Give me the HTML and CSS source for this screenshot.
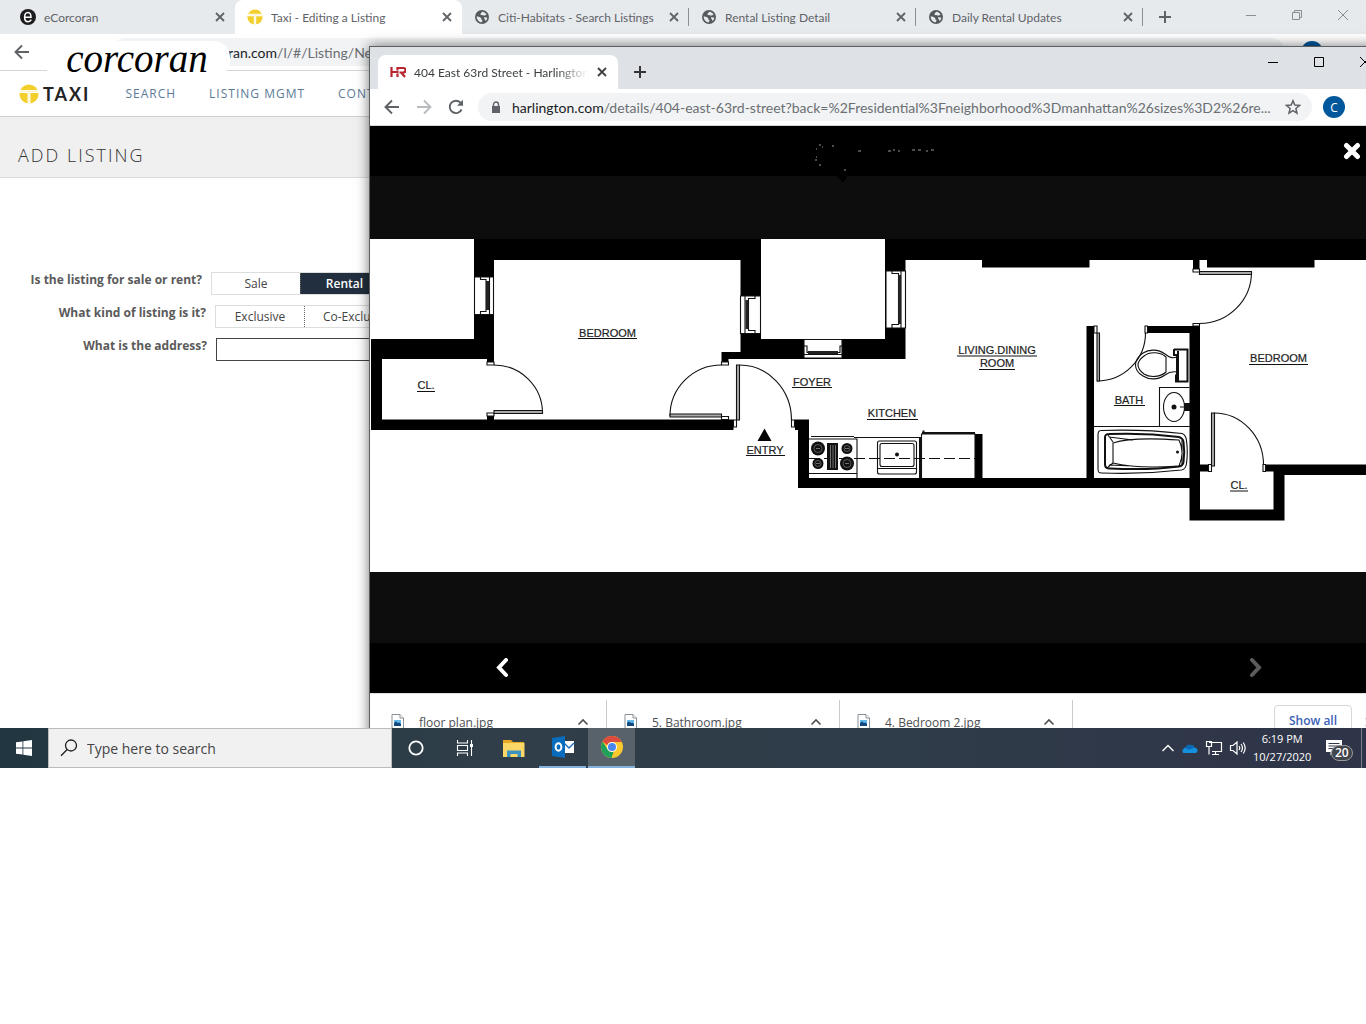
FILE: index.html
```html
<!DOCTYPE html>
<html lang="en">
<head>
<meta charset="utf-8">
<title>Taxi - Editing a Listing</title>
<link rel="stylesheet" href="styles.css">
</head>
<body>
<svg class="sprite" aria-hidden="true">
  <symbol id="x" viewBox="0 0 12 12"><path d="M2 2l8 8M10 2l-8 8" fill="none" stroke="currentColor" stroke-width="1.8"/></symbol>
  <symbol id="plus" viewBox="0 0 12 12"><path d="M6 0v12M0 6h12" fill="none" stroke="currentColor" stroke-width="2"/></symbol>
  <symbol id="globe" viewBox="0 0 16 16"><circle cx="8" cy="8" r="7" fill="#55595d"/><path d="M2.6 7.6c1.500 .1 3.200 .2 4.400 1.300.9.900 0 1.700 1 2.100 1.400.4-.1 1.700-.6 2.500C4.700 13.200 2.700 11 2.600 7.600zM8.200 2.700c2 .2 3.500 1.200 4.500 2.900-1.300.6-1.900 1.300-3 .9C8.700 6.200 7 6.600 6.500 5.500c-.3-1.100 1-1.500 1.700-2.800zM10.200 8.300c1.100-.3 2 .1 3.100.5-.2 1.400-.9 2.500-1.900 3.300-.2-1-.1-1.500-.8-2.200-.5-.5-.9-1-.4-1.600z" fill="#e7eaed"/></symbol>
  <symbol id="taxi" viewBox="0 0 20 20"><circle cx="10" cy="10" r="9.500" fill="#f3cf2c"/><path d="M1 7.500h18M10 7.500V20" stroke="#fff" stroke-width="3" fill="none"/><path d="M1 7.200h18M10 7.500V20" stroke="#f8e48c" stroke-width=".6" fill="none"/></symbol>
  <symbol id="back" viewBox="0 0 16 16"><path d="M15 8H2M8 1.500L1.500 8 8 14.500" fill="none" stroke="currentColor" stroke-width="1.900"/></symbol>
  <symbol id="min" viewBox="0 0 12 12"><path d="M1 6.500h10" stroke="currentColor"/></symbol>
  <symbol id="max" viewBox="0 0 12 12"><path d="M1.500 1.500h9v9h-9z" fill="none" stroke="currentColor"/></symbol>
  <symbol id="restore" viewBox="0 0 12 12"><path d="M1.500 3.500h7v7h-7zM3.500 3.500v-2h7v7h-2" fill="none" stroke="currentColor"/></symbol>
  <symbol id="close" viewBox="0 0 12 12"><path d="M1 1l10 10M11 1L1 11" stroke="currentColor"/></symbol>
  <symbol id="caret" viewBox="0 0 12 8"><path d="M1.500 6.500L6 2l4.500 4.500" fill="none" stroke="currentColor" stroke-width="1.600"/></symbol>
  <symbol id="file" viewBox="0 0 14 17"><path d="M1 .5h8L12.500 4v12.500H1z" fill="#fff" stroke="#8a9096"/><path d="M9 .5V4h3.500" fill="#fff" stroke="#8a9096"/><path d="M3 6h7v6H3z" fill="#62b8e8"/><path d="M3 12V9l2-1.500L7 9l1.500-.500L10 10v2z" fill="#12497e"/></symbol>
</svg>

<main class="desktop">
  <section class="browser" aria-label="Taxi">
    <div class="tabs">
      <div class="tab">
        <svg class="i16" viewBox="0 0 16 16"><circle cx="8" cy="8" r="8" fill="#1d1d1f"/><path d="M4.800 8.300h6.200C11 5 9.800 3.400 8 3.400 5.800 3.400 4.600 5.500 4.600 8.200c0 2.800 1.400 4.500 3.600 4.500 1.400 0 2.400-.8 3-2" fill="none" stroke="#fff" stroke-width="1.500"/></svg>
        <span class="tab-title">eCorcoran</span><button class="tab-close" aria-label="Close"><svg><use href="#x"/></svg></button>
      </div>
      <div class="tab tab-active">
        <svg class="i16"><use href="#taxi"/></svg>
        <span class="tab-title">Taxi - Editing a Listing</span><button class="tab-close" aria-label="Close"><svg><use href="#x"/></svg></button>
      </div>
      <div class="tab tab-line"><svg class="i16"><use href="#globe"/></svg><span class="tab-title">Citi-Habitats - Search Listings</span><button class="tab-close" aria-label="Close"><svg><use href="#x"/></svg></button></div>
      <div class="tab tab-line"><svg class="i16"><use href="#globe"/></svg><span class="tab-title">Rental Listing Detail</span><button class="tab-close" aria-label="Close"><svg><use href="#x"/></svg></button></div>
      <div class="tab tab-line"><svg class="i16"><use href="#globe"/></svg><span class="tab-title">Daily Rental Updates</span><button class="tab-close" aria-label="Close"><svg><use href="#x"/></svg></button></div>
      <button class="new-tab" aria-label="New tab"><svg><use href="#plus"/></svg></button>
      <div class="controls">
        <button aria-label="Minimize"><svg><use href="#min"/></svg></button>
        <button aria-label="Restore"><svg><use href="#restore"/></svg></button>
        <button aria-label="Close window"><svg><use href="#close"/></svg></button>
      </div>
    </div>
    <div class="toolbar">
      <button class="tool" aria-label="Back"><svg><use href="#back"/></svg></button>
      <div class="address"><b>ran.com</b>/l/#/Listing/New</div>
      <span class="avatar avatar-back"></span>
      <div class="corcoran">corcoran</div>
    </div>
    <nav class="site-nav">
      <a class="brand" href="#"><svg><use href="#taxi"/></svg>TAXI</a>
      <a href="#">SEARCH</a><a href="#">LISTING MGMT</a><a href="#">CONTACTS</a>
    </nav>
    <header class="page-head"><h1>ADD LISTING</h1></header>
    <form class="listing">
      <div class="field field-sale" role="group" aria-labelledby="l1">
        <span class="label" id="l1">Is the listing for sale or rent?</span>
        <div class="toggle"><button type="button">Sale</button><button type="button" class="on">Rental</button></div>
      </div>
      <div class="field field-kind" role="group" aria-labelledby="l2">
        <span class="label" id="l2">What kind of listing is it?</span>
        <div class="toggle"><button type="button">Exclusive</button><button type="button" class="wide">Co-Exclusive</button></div>
      </div>
      <div class="field field-address">
        <label class="label" for="addr">What is the address?</label>
        <input id="addr" type="text">
      </div>
    </form>
  </section>

  <section class="browser popup" aria-label="Harlington">
    <div class="tabs">
      <div class="tab tab-active">
        <svg class="i16" viewBox="0 0 16 16"><path d="M1.500 3v10M1.500 8h7M7.500 3v3.500M7.500 9.500V13M8 4h5.200a1.900 1.900 0 010 4.500H9.500M11.500 9l3.500 4" fill="none" stroke="#b8262f" stroke-width="2.200"/></svg>
        <span class="tab-title">404 East 63rd Street - Harlington</span><button class="tab-close" aria-label="Close"><svg><use href="#x"/></svg></button>
      </div>
      <button class="new-tab" aria-label="New tab"><svg><use href="#plus"/></svg></button>
      <div class="controls">
        <button aria-label="Minimize"><svg><use href="#min"/></svg></button>
        <button aria-label="Maximize"><svg><use href="#max"/></svg></button>
        <button aria-label="Close window"><svg><use href="#close"/></svg></button>
      </div>
    </div>
    <div class="toolbar">
      <button class="tool" aria-label="Back"><svg><use href="#back"/></svg></button>
      <button class="tool tool-off" aria-label="Forward"><svg class="flip"><use href="#back"/></svg></button>
      <button class="tool" aria-label="Reload"><svg viewBox="0 0 16 16"><path d="M13.600 10.500A6.200 6.200 0 1112.500 3.700L14 5.200" fill="none" stroke="currentColor" stroke-width="1.900"/><path d="M15 .8v6H9z" fill="currentColor"/></svg></button>
      <div class="address">
        <svg class="lock" viewBox="0 0 10 13"><path d="M1 5h8v7H1z" fill="#5f6368"/><path d="M2.500 5V3.500a2.500 2.500 0 015 0V5" fill="none" stroke="#5f6368" stroke-width="1.400"/></svg>
        <span class="url"><b>harlington.com</b>/details/404-east-63rd-street?back=%2Fresidential%3Fneighborhood%3Dmanhattan%26sizes%3D2%26re...</span>
        <button class="star" aria-label="Bookmark"><svg viewBox="0 0 16 16"><path d="M8 1.800l1.800 4.300 4.700.4-3.600 3 1.100 4.600L8 11.700l-4 2.400 1.100-4.600-3.600-3 4.700-.4z" fill="none" stroke="#5f6368" stroke-width="1.500"/></svg></button>
      </div>
      <span class="avatar">C</span>
      <button class="menu" aria-label="Menu"><svg viewBox="0 0 4 16"><path d="M1 2h2v2H1zM1 7h2v2H1zM1 12h2v2H1z" fill="currentColor"/></svg></button>
    </div>
    <div class="viewer">
      <div class="viewer-bar viewer-top">
        <svg class="specks" viewBox="0 0 122 34" aria-hidden="true"><path d="M20 38h16l-7 11z" fill="#000"/><path d="M5 11h2M2 15h1M8 13h1M18 12h2M2 23h1M1 26h2M5 31h2M44 17h3M30 36h2M74 17h3M79 16h2M84 17h2M98 16h3M104 16h3M112 17h2M117 16h3" fill="none" stroke="#999"/></svg>
        <button class="viewer-close" aria-label="Close image"><svg viewBox="0 0 18 18"><path d="M3.500 3.500l11 11M14.500 3.500l-11 11" stroke="#fff" stroke-width="5" stroke-linecap="round"/></svg></button>
      </div>
      <svg class="plan" viewBox="370 239 1018 333" role="img" aria-label="Floor plan">
        <rect x="370" y="239" width="1018" height="333" fill="#fff"/>
        <g class="wall">
          <path d="M474 239h287v100h124v-100h503v21H905.500v99H728.500v3h-7v-10h19v-92H494v102h-7v-3H382v60.500h105v-3.500h7v3.500h239.500v10.500H371v-91h103z"/>
          <path d="M795 419.500h14V478h166v-44h7.500v44h104V326h7.500v152h95.500V333h-42v-7h52.500v138.500h8.500v7H1200v38h73.500v-38h-8.500v-7H1388V475H1284.500v45.500h-95V488H798v-58h-3z"/>
          <path d="M982 260h107.500v7.500H982zM1207 260h107.500v7.500H1207zM1193 260h6.500v9h-6.500z"/>
          <path d="M764.500 428.500l7 12.500h-14z"/>
        </g>
        <g class="line fill-white">
          <path d="M474.500 277h19v37.500h-19zM740.500 296h20v37.500h-20zM886 271h19.500v57H886zM804 339.500h38V358h-38z"/>
          <path d="M487 362h7v3h-7zM487 413h7v3h-7zM721.500 362h7v3h-7zM721.500 416.500h7v3h-7zM733.500 420h3v7h-3zM791.500 420h3v7h-3zM1193 269h6.500v3h-6.500zM1193 323.500h6.500v2.500h-6.500zM1145 326h2.500v7h-2.500zM1094 326h3v7h-3zM1208.500 464.500h3v7h-3zM1263 464.500h2.500v7h-2.500z"/>
        </g>
        <g class="line">
          <path d="M480.500 277v2.500h5.500v32h-5.500v3M489.500 277v37.500M755 296v2.500h-6.500v32h6.500v3M745 296v37.500M892 271v2.500h6.500v51H892v3.500M901 271v57M804 346h3v6.500h33V346h2M804 354.500h38"/>
          <path class="glass" d="M487.500 281v29M747 300v29M899.500 275v49M808 352.500h30"/>
          <path d="M494 365a48.500 48 0 0148.500 48M721.500 365A51.500 51 0 00670 416M739.500 365a52 55 0 0152 55M1251.500 272a52 51.500 0 01-52 51.500M1097 381a48.500 48 0 0048.500-48M1214 413a49.500 52 0 0149.500 52"/>
        </g>
        <g class="line leaf">
          <path d="M494 410.500h48.500v3H494zM670 414h51.500v3H670zM736.500 365h3v55h-3zM1199.500 271.500h52v3h-52zM1097 333h2.500v48h-2.500zM1211.500 413h3v53h-3z"/>
        </g>
        <g class="line">
          <path d="M809 439h48v39M811 436.500h43M809 473.500h48M854 437.500h66.500V478M921.500 478v-44h53.500V478"/>
          <path class="thick" d="M922 433h53M920 437v41M922.500 431.500h2"/>
          <rect x="877.500" y="441" width="39" height="33" rx="2"/><rect x="880" y="443.500" width="34" height="23" rx="2"/><path d="M878 468.500h38"/>
          <path d="M809 458.500h166" stroke-dasharray="11 4"/>
        </g>
        <g class="burners">
          <circle cx="818" cy="448.500" r="7"/><circle cx="847" cy="448.500" r="5.500"/><circle cx="818" cy="463.500" r="5.500"/><circle cx="847" cy="463.500" r="7"/><path d="M827 443h11v27h-11z"/>
          <circle cx="897" cy="454.500" r="2"/><circle cx="1174" cy="407" r="2.500"/><circle cx="1177.500" cy="452" r="1.500"/><path d="M1184 403h6v8h-6z"/>
        </g>
        <path d="M830.500 445v23M833 445v23M835.500 445v23M816 448.500h4M845 448.500h4M816 463.500h4M845 463.500h4" stroke="#999" stroke-width=".7"/>
        <circle class="ring" cx="818" cy="448.500" r="4"/><circle class="ring" cx="847" cy="448.500" r="3"/><circle class="ring" cx="818" cy="463.500" r="3"/><circle class="ring" cx="847" cy="463.500" r="4"/>
        <g class="line">
          <path class="thick" d="M1174 349.500h14.500M1174 349v6h3v20.500h-1v6h12.500M1178 351v30M1187.500 350v31"/>
          <path d="M1177 357c-5 2-8 0-12-3-7-5-16-5-22-1-10 7-10 17 0 23 6 4 15 4 22-1 4-3 7-4 12-3M1166 357c-5-5-16-6-22-1-8 6-8 12 0 18 6 4 17 3 22-2z"/>
          <path d="M1159.500 426v-38.500h30M1094 426.500h96M1180 407h6"/><ellipse cx="1174" cy="407" rx="10.500" ry="14.500"/>
          <path d="M1101 430.500c26-1 55 0 81 3 3 1 4 3 4.500 7 1 8 1 16 0 23-.5 4-2 6-5 6.500-26 3-55 4-80 3-3 0-3.500-1-3.500-4v-34c0-3 1-4.500 3-4.500z"/>
          <path class="thick" d="M1109 434c24-1 47 0 70 3 3 1 4 2 4.500 5 1 7 1 13 0 20-.5 3-2 4-4.500 4.500-23 3-46 3-69 2-3 0-5-1-5-4v-27c0-3 1-3.500 4-3.500z"/>
          <path d="M1113 443c15-5 38-5 66-3 4 8 4 17 0 26-28 2-50 1-66-3v-20zM1108 435l5 7M1108 467l5-4M1109 437l24 3M1109 465l24 1M1182 440v24"/>
        </g>
        <g class="names">
          <text x="607.500" y="337">BEDROOM</text><text x="426" y="389">CL.</text><text x="812" y="386">FOYER</text><text x="892" y="417">KITCHEN</text><text x="765" y="454">ENTRY</text><text x="997" y="354">LIVING.DINING</text><text x="997" y="367">ROOM</text><text x="1129" y="404">BATH</text><text x="1278.500" y="362">BEDROOM</text><text x="1239" y="489">CL.</text>
        </g>
        <path class="line" d="M578 338.500h59M417 391.500h18M792 387.500h40M867 419.500h51M746 455.500h39M957 356h80M979 369.500h36M1114 405.500h31M1249 364.500h59M1230 491h18"/>
      </svg>
      <div class="viewer-bar viewer-nav">
        <button aria-label="Previous"><svg viewBox="0 0 20 20"><path d="M14 2L7 9.500l7 7.500" fill="none" stroke="#fff" stroke-width="4" stroke-linecap="round"/></svg></button>
        <button aria-label="Next"><svg viewBox="0 0 20 20"><path d="M6 2l7 7.500L6 17" fill="none" stroke="#5c5c5c" stroke-width="4" stroke-linecap="round"/></svg></button>
      </div>
    </div>
    <div class="downloads">
      <div class="download"><svg class="file"><use href="#file"/></svg><span>floor plan.jpg</span><button aria-label="Options"><svg><use href="#caret"/></svg></button></div>
      <div class="download"><svg class="file"><use href="#file"/></svg><span>5. Bathroom.jpg</span><button aria-label="Options"><svg><use href="#caret"/></svg></button></div>
      <div class="download"><svg class="file"><use href="#file"/></svg><span>4. Bedroom 2.jpg</span><button aria-label="Options"><svg><use href="#caret"/></svg></button></div>
      <button class="show-all">Show all</button>
      <button class="shelf-close" aria-label="Close downloads"><svg><use href="#x"/></svg></button>
    </div>
  </section>
</main>

<footer class="taskbar">
  <button class="start" aria-label="Start"><svg viewBox="0 0 16 16"><path d="M0 2.300L6.500 1.400V7.600H0zM7.300 1.300L16 0v7.600H7.300zM0 8.400h6.500v6.200L0 13.700zM7.300 8.400H16V16l-8.700-1.300z" fill="#fff"/></svg></button>
  <label class="search"><svg viewBox="0 0 18 18"><circle cx="11" cy="6.500" r="5.500" fill="none" stroke="#222" stroke-width="1.300"/><path d="M7.200 10.500L1 16.800" stroke="#222" stroke-width="1.400"/></svg><input type="text" placeholder="Type here to search" aria-label="Search"></label>
  <div class="apps">
    <button aria-label="Cortana"><svg viewBox="0 0 24 24"><circle cx="12" cy="12" r="6.700" fill="none" stroke="#fff" stroke-width="1.800"/></svg></button>
    <button aria-label="Task view"><svg viewBox="0 0 24 24"><path d="M4.500 4v3h10V4M4.500 20v-3h10v3M4.500 9.500h10v5h-10zM18.500 4v16" fill="none" stroke="#fff" stroke-width="1.100"/><path d="M17 8h3v3h-3z" fill="#fff"/></svg></button>
    <button aria-label="File Explorer"><svg viewBox="0 0 24 24"><path d="M1 4h8l2 2h11v15H1z" fill="#e9a820"/><path d="M1 7h21.500v14H1z" fill="#fbd768"/><path d="M5 21v-6.500h14V21h-3.500v-3h-7v3z" fill="#3d93bf"/></svg></button>
    <button class="open" aria-label="Outlook"><svg viewBox="0 0 24 24"><path d="M13 6h10v12H13z" fill="#fff"/><path d="M13 8l5 5 5-5" fill="none" stroke="#1a6fb8" stroke-width="1.400"/><path d="M1 3l13-2v22L1 21z" fill="#0a6cbd"/><ellipse cx="7.500" cy="12" rx="2.900" ry="3.700" fill="none" stroke="#fff" stroke-width="1.900"/></svg></button>
    <button class="open current" aria-label="Chrome"><svg viewBox="0 0 24 24"><circle cx="12" cy="12" r="11" fill="#fbc82e"/><path d="M2.500 6.500A11 11 0 0121.800 7H12a5 5 0 00-4.700 3.300z" fill="#dd4b3e"/><path d="M2.500 6.500L7.700 14.500A5 5 0 0013.500 16.800L11.500 23A11 11 0 012.500 6.500z" fill="#1fa15d"/><circle cx="12" cy="12" r="5" fill="#fff"/><circle cx="12" cy="12" r="4" fill="#4a86ee"/></svg></button>
  </div>
  <div class="tray">
    <svg class="up" viewBox="0 0 14 14"><path d="M1.500 10L7 4.500l5.500 5.500" fill="none" stroke="#fff" stroke-width="1.400"/></svg>
    <svg viewBox="0 0 18 18"><path d="M1.500 12.500c0-2.500 1.500-3.700 3-3.700C5.500 6 8 5 10 6.500c1-.5 3-.1 3.500 2.200 2 0 3 1.300 3 2.800s-1 2.600-2.500 2.600H3.500c-1.200 0-2-.6-2-1.600z" fill="#1490df"/><path d="M4.500 8.800C5.500 6 8 5 10 6.500c1-.5 3-.1 3.500 2.200l-6 2z" fill="#0868b5"/></svg>
    <svg viewBox="0 0 18 18"><path d="M4 3.500h12.500v9H7M10.500 12.500v3M7 15.500h7M1.500 2.500h5v5h-5zM4 7.500v8" fill="none" stroke="#fff" stroke-width="1.200"/></svg>
    <svg viewBox="0 0 18 18"><path d="M1.500 6.500h2.500L8 3v12l-4-3.500H1.500zM10 7q1.500 2 0 4M12 5q3 4 0 8M14.200 3.500q4 5.500 0 11" fill="none" stroke="#fff" stroke-width="1.200"/></svg>
    <div class="clock"><time>6:19 PM</time><time>10/27/2020</time></div>
    <div class="notes"><svg viewBox="0 0 18 18"><path d="M1 1h16v12H9l-3.500 3.500V13H1z" fill="#fff"/><path d="M3.500 4.500h11M3.500 7h11M3.500 9.500h7" stroke="#303848" stroke-width="1.200"/></svg><span class="count">20</span></div>
  </div>
  <button class="peek" aria-label="Show desktop"></button>
</footer>
</body>
</html>
```
FILE: styles.css
```css
* { box-sizing: border-box; }
body { margin: 0; background: #fff; color: #4a4a4a; font-family: "Open Sans", "Noto Sans", sans-serif; font-size: 12px; }
button { margin: 0; padding: 0; border: 0; background: none; color: inherit; font: inherit; }
a { color: inherit; text-decoration: none; }
svg { display: block; flex: none; }
.sprite { display: none; }

.desktop { position: relative; height: 728px; overflow: hidden; }

/* Browser chrome */
.tabs { display: flex; height: 34px; padding-left: 8px; background: #e7eaed; color: #5f6368; font-family: Lato, "Open Sans", sans-serif; font-size: 12px; }
.tab { position: relative; display: flex; flex: 0 1 227px; min-width: 0; align-items: center; gap: 8px; padding: 0 9px 0 12px; }
.tab-active { border-radius: 8px 8px 0 0; background: #fff; }
.tab-line { background: linear-gradient(#8b8f93, #8b8f93) 100% 50% / 1px 18px no-repeat; }
.i16 { width: 16px; height: 16px; }
.tab-title { flex: 1; overflow: hidden; white-space: nowrap; }
.tab-close svg, .new-tab svg, .controls svg { width: 12px; height: 12px; }
.new-tab { width: 44px; display: grid; place-items: center; }
.controls { display: flex; height: 30px; margin-left: auto; color: #8b8d90; }
.controls button { display: grid; width: 46px; place-items: center; }
.toolbar { position: relative; display: flex; height: 37px; align-items: center; padding-left: 6px; border-bottom: 1px solid #d4d6d8; background: #fff; color: #5f6368; }
.tool { display: grid; width: 32px; height: 32px; place-items: center; }
.tool svg { width: 16px; height: 16px; }
.tool-off { color: #b9bbbe; }
.flip { transform: scaleX(-1); }
.address { display: flex; flex: 1; height: 28px; min-width: 0; align-items: center; border-radius: 14px; background: #f1f3f4; color: #6b6f73; font-family: Lato, "Open Sans", sans-serif; font-size: 14px; white-space: nowrap; }
.address b { color: #202124; font-weight: 400; }
.toolbar > .address:nth-child(2) { margin: 0 16px 0 74px; padding-left: 116px; }
.avatar { display: grid; width: 22px; height: 22px; flex: none; place-items: center; border-radius: 50%; background: #01579b; color: #fff; font-size: 12px; }
.avatar-back { margin-right: 43px; }
.corcoran { position: absolute; top: 7px; left: 44px; width: 186px; height: 36px; border-radius: 16px; background: #fff; color: #000; font: italic 39px/36px "Liberation Serif", serif; text-align: center; }

/* Taxi page */
.site-nav { display: flex; height: 46px; align-items: center; gap: 33px; padding-left: 19px; border-bottom: 1px solid #cfcfcf; color: #5b7a99; font-size: 12px; letter-spacing: 1px; }
.brand { display: flex; align-items: center; gap: 4px; margin-right: 2px; color: #222; font: 700 18px/20px Lato, sans-serif; letter-spacing: 2px; }
.brand svg { width: 20px; height: 20px; }
.page-head { padding: 25px 18px 8px; border-bottom: 1px solid #dcdcdc; background: #f0f0f0; }
.page-head h1 { margin: 0; color: #333; font-size: 18px; font-weight: 300; line-height: 27px; letter-spacing: 2px; }
.listing { display: grid; gap: 10px; padding-top: 94px; }
.field { display: flex; gap: 9px; }
.label { color: #5a5a5a; font-weight: 700; line-height: 16px; text-align: right; }
.field-sale .label { width: 202px; }
.field-kind .label { width: 206px; }
.field-address .label { width: 207px; }
.toggle { display: flex; border: 1px solid #ddd; }
.toggle button { width: 88px; height: 21px; color: #444; }
.toggle button + button { border-left: 1px dotted #666; }
.toggle .wide { width: 106px; }
.toggle .on { background: #222f3e; color: #fff; font-weight: 600; }
.listing input { width: 300px; height: 23px; border: 1px solid #444; background: #fff; }

/* Harlington window */
.popup { position: absolute; top: 46px; right: -22px; left: 369px; border: solid #5c5f62; border-width: 1px 0 0 1px; background: #fff; box-shadow: 0 0 12px rgba(0, 0, 0, .55); }
.popup .tabs { height: 42px; background: #dee1e6; }
.popup .tab { flex-basis: 240px; margin-top: 8px; padding-right: 10px; color: #3c4043; }
.popup .tab-title { -webkit-mask-image: linear-gradient(90deg, #000 82%, transparent); mask-image: linear-gradient(90deg, #000 82%, transparent); }
.popup .new-tab { padding-top: 8px; color: #333; }
.popup .controls { color: #000; }
.popup .address { margin: 0 11px 0 6px; padding: 0 11px 0 13px; gap: 11px; }
.lock { width: 10px; height: 13px; }
.url { flex: 1; overflow: hidden; }
.star svg { width: 16px; height: 16px; }
.menu { width: 43px; }
.menu svg { width: 4px; height: 16px; margin: 0 auto; }
.viewer { background: #0d0d0d; }
.viewer-bar { display: flex; height: 50px; align-items: center; background: #000; }
.viewer-top { justify-content: flex-end; margin-bottom: 63px; padding-right: 27px; }
.specks { width: 122px; height: 34px; margin-right: 407px; overflow: visible; }
.viewer-close svg { width: 18px; height: 18px; }
.plan { width: 100%; height: auto; }
.viewer-nav { justify-content: space-between; margin-top: 71px; padding: 0 12%; }
.viewer-nav svg { width: 20px; height: 20px; }
.wall { fill: #000; }
.line { fill: none; stroke: #111; stroke-width: 1.1; }
.fill-white { fill: #fff; }
.line .thick { stroke-width: 2; }
.line .glass { stroke: #222; stroke-width: 3; }
.leaf { fill: #aaa; }
.burners { fill: #111; }
.ring { fill: none; stroke: #888; stroke-width: .6; }
.names { fill: #222; stroke: #222; stroke-width: .2; font-family: "Liberation Sans", Arial, sans-serif; font-size: 11px; text-anchor: middle; }
.downloads { display: flex; height: 57px; align-items: center; padding-left: 3px; border-top: 1px solid #ddd; color: #4c4f53; }
.download { display: flex; flex: 0 1 234px; height: 44px; align-items: center; padding: 0 17px 0 18px; border-right: 1px solid #c8cacc; font-size: 12px; }
.download + .download { flex-basis: 233px; padding-left: 17px; }
.download span { flex: 1; margin-left: 14px; }
.download button svg { width: 12px; height: 8px; }
.file { width: 14px; height: 17px; }
.show-all { width: 78px; height: 30px; margin: 0 0 4px auto; border: 1px solid #d5d7da; border-radius: 4px; color: #3a62b5; font-weight: 600; }
.shelf-close { width: 12px; margin: 0 12px; }
.shelf-close svg { width: 12px; height: 12px; }

/* Taskbar */
.taskbar { display: flex; height: 40px; background: linear-gradient(90deg, #213640, #2f3e49 35%, #2f3c49 65%, #2f3448); color: #fff; }
.start { display: grid; width: 48px; place-items: center; }
.start svg { width: 16px; height: 16px; }
.search { display: flex; width: 344px; align-items: center; gap: 9px; padding-left: 11px; border: 1px solid #bbb; background: #f1f1f1; }
.search svg { width: 18px; height: 18px; }
.search input { flex: 1; min-width: 0; padding: 0; border: 0; background: none; font: 14px "Open Sans", sans-serif; }
.search input::placeholder { color: #444; opacity: 1; }
.apps { display: flex; gap: 2px; }
.apps button { display: grid; width: 47px; place-items: center; }
.apps svg { width: 24px; height: 24px; }
.apps .open { border-bottom: 2px solid #83b2dc; }
.apps .current { background: #57626b; }
.tray { display: flex; align-items: center; gap: 6px; margin-left: auto; padding-right: 18px; }
.tray > svg { width: 18px; height: 18px; }
.tray .up { width: 14px; height: 14px; }
.clock { display: grid; width: 58px; text-align: center; font-size: 11px; line-height: 18px; }
.notes { position: relative; margin-left: 8px; }
.notes svg { width: 18px; height: 18px; }
.count { position: absolute; top: 6px; left: 6px; padding: 0 3px; border: 1px solid #999; border-radius: 8px; background: #41454c; font-size: 12px; font-weight: 600; line-height: 14px; }
.peek { width: 5px; border-left: 1px solid #7c8190; }
```
